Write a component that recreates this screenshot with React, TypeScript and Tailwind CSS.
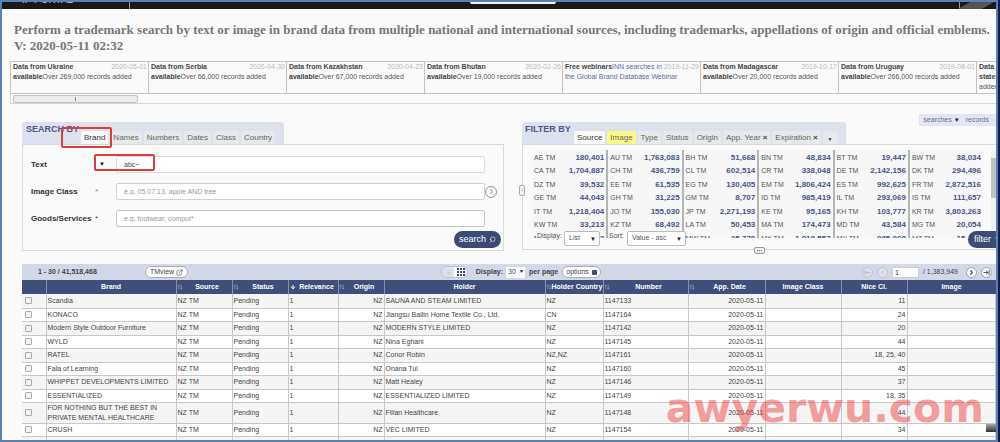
import React, { useState } from 'react';
import { ChevronRight, ExternalLink, Grid3x3, Search, ArrowLeftToLine, ArrowRightToLine, ChevronLeft, ArrowUpDown, ArrowDown, List } from 'lucide-react';

const NEWS = [
  { title: 'Data from Ukraine available', text: 'Over 269,000 records added', date: '2020-05-01' },
  { title: 'Data from Serbia available', text: 'Over 66,000 records added', date: '2020-04-30' },
  { title: 'Data from Kazakhstan available', text: 'Over 67,000 records added', date: '2020-04-22' },
  { title: 'Data from Bhutan available', text: 'Over 19,000 records added', date: '2020-02-26' },
  { title: 'Free webinars', text: 'INN searches in the Global Brand Database Webinar', date: '2019-11-29', link: true },
  { title: 'Data from Madagascar available', text: 'Over 20,000 records added', date: '2019-10-17' },
  { title: 'Data from Uruguay available', text: 'Over 266,000 records added', date: '2019-08-01' },
  { title: 'Data from OAPI member states available', text: 'Over 1,350,000 records added', date: '2019-07-12' },
];

const SEARCH_TABS = ['Brand', 'Names', 'Numbers', 'Dates', 'Class', 'Country'];
const FILTER_TABS = ['Source', 'Image', 'Type', 'Status', 'Origin', 'App. Year', 'Expiration'];

const SOURCES = [
  [['AE', '180,401'], ['AU', '1,763,083'], ['BH', '51,668'], ['BN', '48,834'], ['BT', '19,447'], ['BW', '38,034']],
  [['CA', '1,704,887'], ['CH', '436,759'], ['CL', '602,514'], ['CR', '338,048'], ['DE', '2,142,156'], ['DK', '294,496']],
  [['DZ', '39,532'], ['EE', '61,535'], ['EG', '130,405'], ['EM', '1,806,424'], ['ES', '992,625'], ['FR', '2,872,516']],
  [['GE', '44,043'], ['GH', '31,225'], ['GM', '8,707'], ['ID', '985,419'], ['IL', '293,069'], ['IS', '111,657']],
  [['IT', '1,218,404'], ['JO', '155,030'], ['JP', '2,271,193'], ['KE', '95,165'], ['KH', '103,777'], ['KR', '3,803,263']],
  [['KW', '33,213'], ['KZ', '68,492'], ['LA', '50,453'], ['MA', '174,473'], ['MD', '43,584'], ['MG', '20,054']],
  [['MK', '30,203'], ['MN', '28,150'], ['MW', '25,770'], ['MX', '1,818,557'], ['MY', '985,968'], ['MZ', '15,402']],
];

const COLUMNS = [
  { label: '', width: 'w-[24px]' },
  { label: 'Brand', width: 'w-[130px]' },
  { label: 'Source', width: 'w-[56px]', sort: true },
  { label: 'Status', width: 'w-[56px]', sort: true },
  { label: 'Relevance', width: 'w-[50px]', active: true },
  { label: 'Origin', width: 'w-[46px]', sort: true },
  { label: 'Holder', width: 'w-[161px]' },
  { label: 'Holder Country', width: 'w-[58px]', sort: true },
  { label: 'Number', width: 'w-[85px]', sort: true },
  { label: 'App. Date', width: 'w-[77px]', sort: true },
  { label: 'Image Class', width: 'w-[76px]' },
  { label: 'Nice Cl.', width: 'w-[66px]' },
  { label: 'Image', width: '' },
];

const RECORDS = [
  { brand: 'Scandia', holder: 'SAUNA AND STEAM LIMITED', country: 'NZ', number: '1147133', nice: '11' },
  { brand: 'KONACO', holder: 'Jiangsu Bailin Home Textile Co., Ltd.', country: 'CN', number: '1147164', nice: '24' },
  { brand: 'Modern Style Outdoor Furniture', holder: 'MODERN STYLE LIMITED', country: 'NZ', number: '1147142', nice: '20' },
  { brand: 'WYLD', holder: 'Nina Eghani', country: 'NZ', number: '1147145', nice: '44' },
  { brand: 'RATEL', holder: 'Conor Robin', country: 'NZ,NZ', number: '1147161', nice: '18, 25, 40' },
  { brand: 'Fala of Learning', holder: 'Onana Tui', country: 'NZ', number: '1147160', nice: '45' },
  { brand: 'WHIPPET DEVELOPMENTS LIMITED', holder: 'Matt Healey', country: 'NZ', number: '1147146', nice: '37' },
  { brand: 'ESSENTIALIZED', holder: 'ESSENTIALIZED LIMITED', country: 'NZ', number: '1147149', nice: '18, 35' },
  { brand: 'FOR NOTHING BUT THE BEST IN\nPRIVATE MENTAL HEALTHCARE', holder: 'Fillan Healthcare', country: 'NZ', number: '1147148', nice: '44' },
  { brand: 'CRUSH', holder: 'VEC LIMITED', country: 'NZ', number: '1147154', nice: '34' },
  { brand: 'STRIPVER', holder: 'Clarion Company Normandy', country: 'NZ', number: '1147158', nice: '25, 40' },
];

const Caret = () => <span className="pointer-events-none absolute right-1 text-[6px] leading-none text-[#222]">▼</span>;

const News = () => (
  <section className="ml-2">
    <div className="flex overflow-hidden border-t border-l border-[#c4c4c4]">
      {NEWS.map((item) => (
        <article key={item.title} className="h-[32px] w-[138px] shrink-0 border-r border-b border-[#c4c4c4] pl-[2px] text-[7px] leading-[10px] text-[#555]">
          <time className="float-right pr-px text-[#bbb]">{item.date}</time>
          <b className="text-[#444]">{item.title}</b>
          {item.link ? <a href="#webinar" className="text-[#5a6c9e]">{item.text}</a> : <span>{item.text}</span>}
        </article>
      ))}
    </div>
    <div className="h-[10px] border-b border-l border-[#d8d8d8] pt-px pl-[2px]">
      <div className="flex h-2 w-[125px] items-center justify-center rounded-[2px] border border-[#c2c2c2] bg-[#ebebeb]">
        <span className="h-1 w-px bg-[#888]" />
      </div>
    </div>
  </section>
);

const SearchPanel = () => {
  const [text, setText] = useState('abc~');
  return (
    <section className="relative pt-2">
      <div className="flex h-[22px] w-[262px] items-end rounded-t-[3px] bg-[#dde1ee]">
        <h2 className="w-[59px] shrink-0 self-start pl-1 text-[9px] leading-[14px] font-bold whitespace-nowrap text-[#4c5a87]">SEARCH BY</h2>
        <div className="flex gap-[2px]">
          {SEARCH_TABS.map((tab, i) => (
            <button key={tab} className={`h-[13px] rounded-t-[2px] px-[3px] text-[8px] leading-[13px] ${i === 0 ? 'bg-[#fafafa] text-[#333]' : 'bg-[#e6e8ea] text-[#666]'}`}>
              {tab}
            </button>
          ))}
        </div>
      </div>
      <form className="border border-[#dadada] pt-[11px] pr-[2px] pb-[2px] pl-2" onSubmit={(e) => e.preventDefault()}>
        <div className="flex flex-col gap-[10px] text-[8px]">
          <div className="flex items-center">
            <label htmlFor="text" className="w-[68px] leading-[13px] font-bold text-[#333]">Text</label>
            <span className="w-[17px] text-[6px] text-[#111]">▼</span>
            <input id="text" value={text} onChange={(e) => setText(e.target.value)} className="mr-4 h-[17px] min-w-0 flex-1 rounded-[2px] border border-[#dcdcdc] bg-white px-[7px] text-[7px] text-[#444]" />
          </div>
          <div className="flex items-center">
            <label htmlFor="image" className="w-[64px] font-bold text-[#333]">Image Class</label>
            <span className="w-[21px] text-[#888]">*</span>
            <input id="image" placeholder="e.g. 05.07.13, apple AND tree" className="h-[17px] min-w-0 flex-1 rounded-[2px] border border-[#d2d2d2] bg-white px-[7px] text-[7px] placeholder:text-[#999]" />
            <button aria-label="Image classes" className="mr-1 flex size-3 items-center justify-center rounded-full border border-[#8d92ad] bg-white text-[#4c5a87]">
              <ChevronRight className="size-[7px]" strokeWidth={3} />
            </button>
          </div>
          <div className="flex items-center">
            <label htmlFor="goods" className="w-[64px] font-bold text-[#333]">Goods/Services</label>
            <span className="w-[21px] text-[#444]">*</span>
            <input id="goods" placeholder="e.g. footwear, comput*" className="mr-4 h-[17px] min-w-0 flex-1 rounded-[2px] border border-[#c6c6c6] bg-white px-[7px] text-[7px] placeholder:text-[#999]" />
          </div>
        </div>
        <button className="mt-1 ml-auto flex h-[17px] items-center gap-[3px] rounded-full bg-[#3b4b76] px-[5px] text-[9px] text-white">
          search
          <Search className="size-[7px] -scale-x-100" />
        </button>
      </form>
      {/* highlighted steps */}
      <div className="pointer-events-none absolute top-[13px] left-[39px] h-[21px] w-[51px] rounded-[2px] border-2 border-[#dc3c3c]" />
      <div className="pointer-events-none absolute top-[40px] left-[72px] h-[17px] w-[61px] rounded-[2px] border-2 border-[#dc3c3c]" />
    </section>
  );
};

const FilterPanel = () => (
  <section className="relative">
    <div className="flex items-start justify-between">
      <div className="mt-2 flex h-[22px] w-[324px] items-end rounded-t-[3px] bg-[#dde1ee]">
        <h2 className="w-[52px] shrink-0 self-start pl-[3px] text-[9px] leading-[14px] font-bold whitespace-nowrap text-[#4c5a87]">FILTER BY</h2>
        <div className="flex gap-[2px]">
          {FILTER_TABS.map((tab, i) => (
            <button key={tab} className={`h-[13px] rounded-t-[2px] px-[3px] text-[8px] leading-[13px] whitespace-nowrap ${i === 0 ? 'bg-[#fafafa] text-[#333]' : i === 1 ? 'bg-[#fbf88a] text-[#666]' : 'bg-[#e6e8ea] text-[#666]'}`}>
              {tab}
              {i > 4 && <b className="pl-[2px] text-[#444]">×</b>}
            </button>
          ))}
          <button aria-label="More filters" className="h-[13px] rounded-t-[2px] bg-[#e6e8ea] px-[5px] pt-1 text-[5px] text-[#333]">▼</button>
        </div>
      </div>
      <nav className="flex h-3 items-center gap-[6px] bg-[#e3e6f1] pr-[7px] pl-1 text-[7px] text-[#66719a]">
        <a href="#searches">searches <span className="text-[6px] text-[#222]">▼</span></a>
        <a href="#records">records</a>
      </nav>
    </div>
    <div className="border-t border-b border-l border-[#dadada] pt-[5px] pb-px">
      <div className="flex h-[88px] overflow-hidden">
        <table className="ml-[9px] flex-1 table-fixed self-start bg-[#f7f7f8]">
          <tbody>
            {SOURCES.map((row, r) => (
              <tr key={r} className="odd:h-[14px] even:h-[13px]">
                {row.map(([code, count], c) => (
                  <React.Fragment key={code}>
                    <td className="w-[27px] p-0 pl-[2px] text-[7px] leading-[13px] whitespace-nowrap text-[#555]">{code} TM</td>
                    <td className={`p-0 pr-[2px] text-right text-[8px] leading-[13px] font-bold text-[#475585] ${c < 5 ? 'border-r-2 border-[#b4b4b4]' : ''}`}>{count}</td>
                  </React.Fragment>
                ))}
              </tr>
            ))}
          </tbody>
        </table>
        <div className="ml-2 w-[5px] bg-[#f1f1f1] pt-2">
          <div className="h-10 bg-[#c1c1c1]" />
        </div>
      </div>
      <div className="relative -mt-[7px] flex items-start pl-[14px] text-[7px] text-[#555]">
        <label htmlFor="display" className="w-[27px] bg-[#fafafa] leading-[10px]">Display:</label>
        <div className="relative flex items-center">
          <select id="display" className="h-[15px] w-9 appearance-none rounded-[2px] border border-[#bbb] bg-white pl-1 text-[7px]">
            <option>List</option>
          </select>
          <Caret />
        </div>
        <label htmlFor="sort" className="ml-[9px] w-[18px] bg-[#fafafa] leading-[10px]">Sort:</label>
        <div className="relative flex items-center">
          <select id="sort" className="h-[15px] w-[59px] appearance-none rounded-[2px] border border-[#bbb] bg-white pl-1 text-[7px]">
            <option>Value - asc</option>
          </select>
          <Caret />
        </div>
        <button className="ml-auto flex h-[17px] w-[28px] items-center gap-[3px] overflow-hidden rounded-l-full bg-[#3b4b76] pl-[6px] text-[9px] text-white">
          filter <span className="text-[7px]">▼</span>
        </button>
      </div>
    </div>
    {/* resize handles */}
    <span className="absolute top-[71px] -left-[3px] flex h-[11px] w-[6px] items-center justify-center rounded-[2px] border border-[#aaa] bg-[#f2f2f2] text-[6px] text-[#777]">⁞</span>
    <span className="absolute -bottom-[3px] left-[49%] flex h-[7px] w-[11px] items-center justify-center gap-px rounded-[2px] border border-[#999] bg-[#f2f2f2]">
      <i className="size-px bg-[#666]" />
      <i className="size-px bg-[#666]" />
      <i className="size-px bg-[#666]" />
    </span>
  </section>
);

const Toolbar = () => (
  <div className="flex h-4 items-center bg-[#d3d8e9] text-[7px] text-[#444]">
    <div className="flex w-[43%] items-center pl-4">
      <b className="w-[107px]">1 - 30 / 41,518,468</b>
      <button className="flex h-3 items-center gap-[2px] rounded-full border border-[#a9adbb] bg-white px-1">
        TMview <ExternalLink className="size-[7px]" />
      </button>
    </div>
    <div className="flex h-3 w-[27px] overflow-hidden rounded-full border border-[#b9bed0]">
      <button aria-label="List" className="flex flex-1 items-center justify-center bg-[#e0e3ee] text-[#bbb]"><List className="size-[7px]" /></button>
      <button aria-label="Table" className="flex flex-1 items-center justify-center bg-white text-[#3b4b76]">
        <svg viewBox="0 0 8 8" className="size-2" fill="currentColor">
          <path d="M0 0h2v2H0zM3 0h2v2H3zM6 0h2v2H6zM0 3h2v2H0zM3 3h2v2H3zM6 3h2v2H6zM0 6h2v2H0zM3 6h2v2H3zM6 6h2v2H6z" />
        </svg>
      </button>
    </div>
    <label htmlFor="rows" className="ml-2 font-bold">Display:</label>
    <div className="relative ml-[3px] flex items-center">
      <select id="rows" className="h-[11px] w-[19px] appearance-none bg-white pl-[2px] text-[7px]">
        <option>30</option>
      </select>
      <span className="pointer-events-none absolute right-px text-[5px] text-[#111]">▼</span>
    </div>
    <b className="ml-1">per page</b>
    <button className="ml-1 flex h-3 items-center gap-[3px] rounded-full border border-[#a9adbb] bg-white px-[3px]">
      options <span className="size-[5px] rounded-[1px] bg-[#3f4d73]" />
    </button>
    <div className="ml-auto flex items-center gap-1 pr-1">
      <button aria-label="First page" className="flex size-[11px] items-center justify-center rounded-full border border-[#bcc0cf] bg-[#dfe2ee] text-[#aaa]"><ArrowLeftToLine className="size-[7px]" /></button>
      <button aria-label="Previous page" className="flex size-[11px] items-center justify-center rounded-full border border-[#bcc0cf] bg-[#dfe2ee] text-[#aaa]"><ChevronLeft className="size-[7px]" /></button>
      <input aria-label="Page" defaultValue="1" className="h-[11px] w-[27px] border border-[#ccc] bg-white px-[2px] text-[7px]" />
      <span>/ 1,383,949</span>
      <button aria-label="Next page" className="ml-1 flex size-[11px] items-center justify-center rounded-full border border-[#999eb2] bg-white"><ChevronRight className="size-[7px]" strokeWidth={4} /></button>
      <button aria-label="Last page" className="flex size-[11px] items-center justify-center rounded-full border border-[#999eb2] bg-white"><ArrowRightToLine className="size-[7px]" strokeWidth={3} /></button>
    </div>
  </div>
);

const Results = () => (
  <section className="mt-[13px] ml-5">
    <Toolbar />
    <table className="w-full table-fixed text-[7px] leading-[10px] text-[#444]">
      <thead className="bg-[#3d4f7a] text-white">
        <tr className="h-[14px]">
          {COLUMNS.map((col, i) => (
            <th key={i} className={`border-r border-[#8590b0] p-0 whitespace-nowrap last:border-r-0 ${col.width}`}>
              <div className="flex items-center">
                {col.sort && <ArrowUpDown className="size-[6px] shrink-0 text-[#a9b2cc]" />}
                {col.active && <ArrowDown className="ml-px size-[6px] shrink-0" strokeWidth={4} />}
                <span className="flex-1 text-center">{col.label}</span>
              </div>
            </th>
          ))}
        </tr>
      </thead>
      <tbody className="[&_td]:border-r [&_td]:border-b [&_td]:border-[#c8c8c8] [&_td]:p-0 [&_td]:px-px [&_td]:whitespace-pre">
        {RECORDS.map((rec) => (
          <tr key={rec.number} className="odd:h-[14px] odd:bg-[#f5f5f5] even:h-[13px] even:bg-white">
            <td>
              <input type="checkbox" aria-label={rec.brand} className="ml-[2px] block size-[7px] appearance-none rounded-[1px] border border-[#aaa] bg-[#f4f4f4] checked:bg-[#3d4f7a]" />
            </td>
            <td>{rec.brand}</td>
            <td>NZ TM</td>
            <td>Pending</td>
            <td>1</td>
            <td className="text-right">NZ</td>
            <td>{rec.holder}</td>
            <td>{rec.country}</td>
            <td>{rec.number}</td>
            <td className="text-right">2020-05-11</td>
            <td />
            <td className="text-right">{rec.nice}</td>
            <td />
          </tr>
        ))}
      </tbody>
    </table>
  </section>
);

const App: React.FC = () => (
  <div className="h-screen overflow-hidden bg-[#0e1c4a] pr-[2px] font-['Liberation_Sans',Arial,sans-serif]">
    <div className="relative h-full overflow-hidden border-2 border-[#5b80b5] bg-[#fafafa]">
      <header className="flex h-[7px] overflow-hidden bg-[#191919]">
        <div className="w-[128px] shrink-0 border-r border-[#999] pl-5">
          <span className="-mt-2 block text-[10px] leading-[12px] text-[#ccc]">IP PORTAL</span>
        </div>
        <div className="ml-[340px] h-[2px] w-[86px] rounded-b-[2px] bg-[#f4f4f4]" />
        <div className="ml-auto w-[37px] border-l border-[#999] pl-1">
          <div className="h-full w-6 -skew-x-[60deg] bg-[#555]" />
        </div>
      </header>
      <h1 className="mt-[13px] pl-3 font-['Liberation_Serif',serif] text-[13px] leading-4 font-bold text-[#777]">
        Perform a trademark search by text or image in brand data from multiple national and international sources, including trademarks, appellations of origin and official emblems.
        <br />
        V: 2020-05-11 02:32
      </h1>
      <div className="h-[7px]" />
      <News />
      <main>
        <div className="mt-[10px] ml-5 grid grid-cols-[482fr_474fr] gap-[18px]">
          <SearchPanel />
          <FilterPanel />
        </div>
        <Results />
      </main>
      <div className="pointer-events-none absolute right-3 bottom-[11px] font-['DejaVu_Sans',sans-serif] text-[41px] leading-none font-bold text-[#ef4444]/50">awyerwu.com</div>
      <div className="absolute right-0 bottom-2 h-2 w-[10px] bg-linear-to-b from-[#aaa] to-[#333]" />
    </div>
  </div>
);

export default App;
